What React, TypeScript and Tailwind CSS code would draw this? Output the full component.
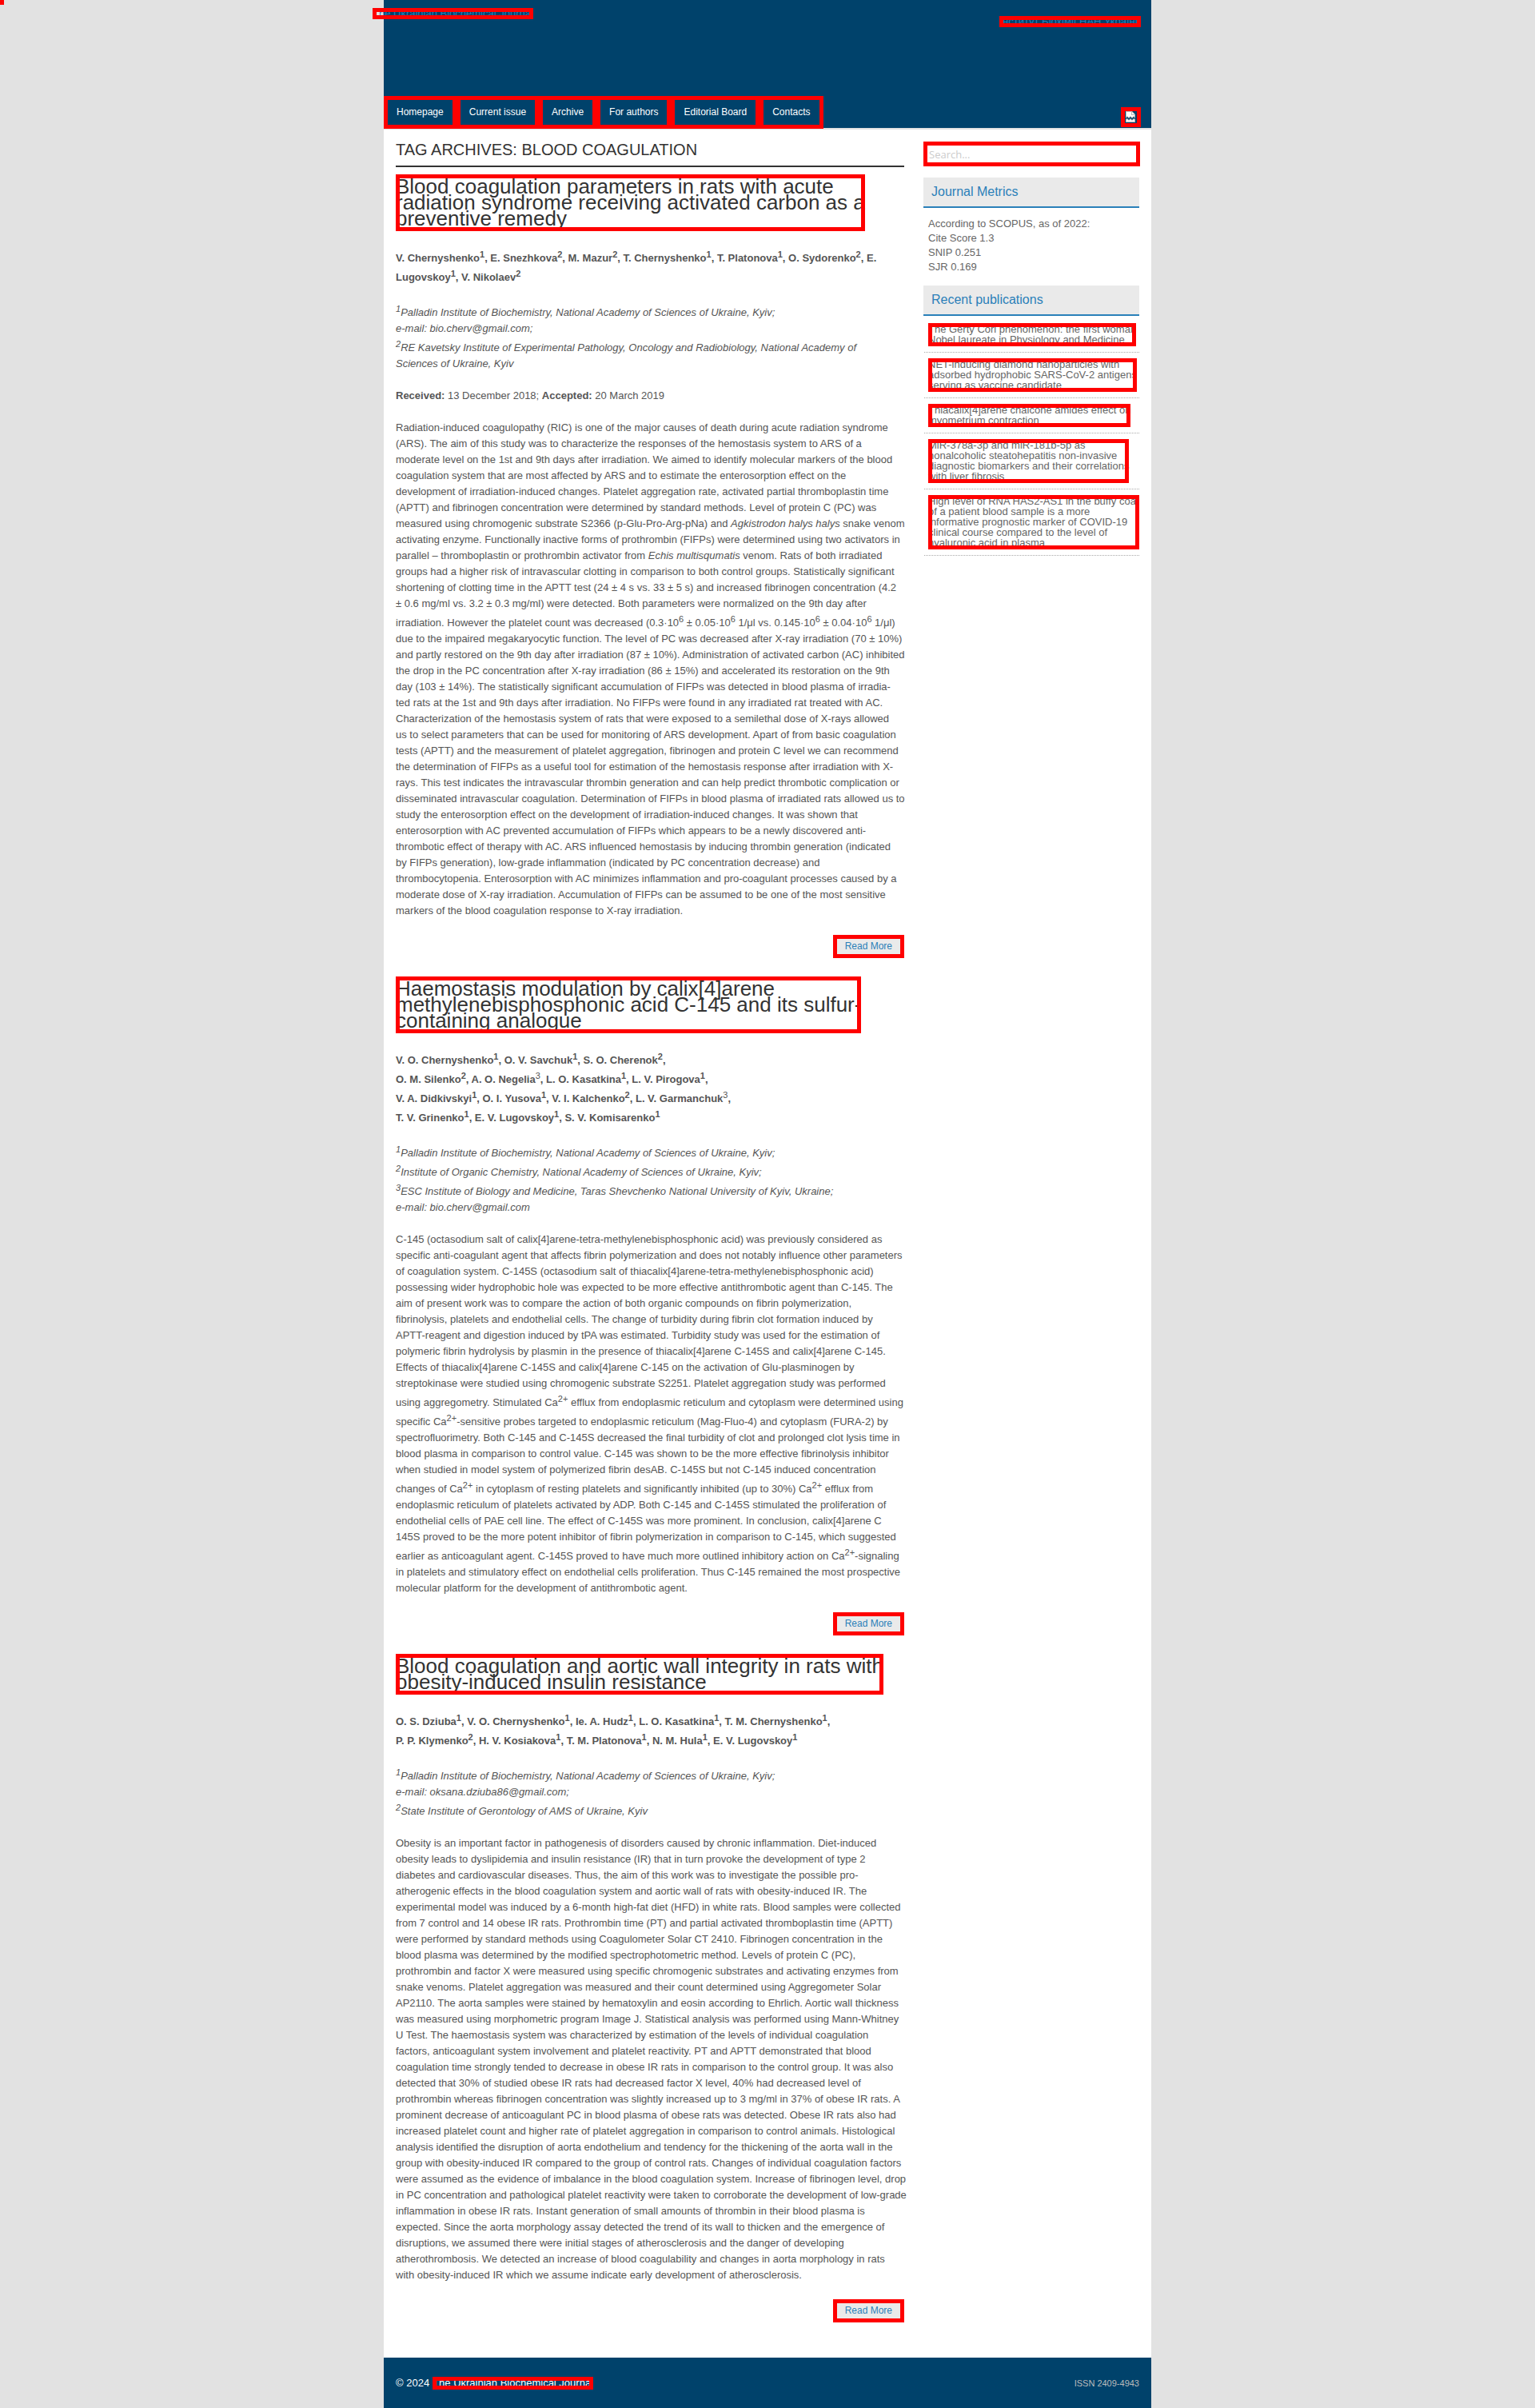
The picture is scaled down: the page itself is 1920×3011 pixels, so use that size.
import React from "react";

const NAV = ["Homepage", "Current issue", "Archive", "For authors", "Editorial Board", "Contacts"];

const RECENT: string[][] = [
  ["The Gerty Cori phenomenon: the first woman", "Nobel laureate in Physiology and Medicine"],
  ["NET-inducing diamond nanoparticles with", "adsorbed hydrophobic SARS-CoV-2 antigens", "serving as vaccine candidate"],
  ["Thiacalix[4]arene chalcone amides effect on", "myometrium contraction"],
  ["MiR-378a-3p and miR-181b-5p as", "nonalcoholic steatohepatitis non-invasive", "diagnostic biomarkers and their correlations", "with liver fibrosis"],
  ["High level of RNA HAS2-AS1 in the buffy coat", "of a patient blood sample is a more", "informative prognostic marker of COVID-19", "clinical course compared to the level of", "hyaluronic acid in plasma"],
];

const MARK = "outline-[5px] -outline-offset-[5px] outline-[#ff0000]";

function Lines({ lines }: { lines: string[] }) {
  return (
    <>
      {lines.map((line) => (
        <span key={line} className="block whitespace-nowrap">
          {line}
        </span>
      ))}
    </>
  );
}

function Article({ title, children }: { title: string[]; children: React.ReactNode }) {
  return (
    <article className="mb-[23px]">
      <h2 className="mb-5 flex text-[26px] leading-[20px] text-[#333333]">
        <a href="#" className={`block pt-[5px] pb-[6px] ${MARK}`}>
          <Lines lines={title} />
        </a>
      </h2>
      <div className="flex flex-col gap-5 [&_sup]:static [&_sup]:align-[5px] [&_sup]:text-[11px] [&_sup]:leading-[18px]">{children}</div>
      <div className="mt-5 flex justify-end">
        <a href="#" className={`block bg-[#eaeaea] px-[15px] py-1 text-[12px] leading-[21px] text-[#2a80b9] ${MARK}`}>
          Read More
        </a>
      </div>
    </article>
  );
}

function WidgetTitle({ children }: { children: React.ReactNode }) {
  return (
    <h3 className="border-b-2 border-[#2a80b9] bg-[#eaeaea] px-[10px] text-[16px] leading-[36px] text-[#2a80b9]">{children}</h3>
  );
}

function BrokenImage() {
  return (
    <svg width="15" height="15" viewBox="0 0 15 15" role="img" aria-label="Language" className="block">
      <path d="M1 0h8l4 4v5l-2-2-2 2-2-2-2 2-2-2-2 2z" fill="#b8b8b8" />
      <path d="M2 1h6v4h4v2l-1-1-2 2-2-2-2 2-2-2-1 1z" fill="#ffffff" />
      <path d="M9 1l3 3H9z" fill="#ffffff" />
      <path d="M1 10l2-1 2 2 2-2 2 2 2-2 2 1v4H1z" fill="#b8b8b8" />
      <path d="M2 11l1-1 2 2 2-2 2 2 2-2 1 1v2H2z" fill="#ffffff" />
    </svg>
  );
}

const S = ({ n }: { n: string }) => <sup>{n}</sup>;

export default function App() {
  return (
    <div className="min-h-screen bg-[#e2e2e2] font-['Liberation_Sans',Arial,sans-serif] text-[13px] leading-[20px] text-[#555555]">
      <div className="absolute top-0 left-0 h-[6px] w-[5px] bg-[#ff0000]" />
      <div className="mx-auto max-w-[960px] bg-white">
        <header className="flex h-[162px] flex-col justify-between border-b-2 border-[#e2e2e2] bg-[#00426b]">
          <div className="flex items-start justify-between pr-[13px] leading-[14px] text-[#2a80b9]">
            <a href="#" className={`mt-[10px] -ml-[14px] block h-[14px] ${MARK}`}>
              The Ukrainian Biochemical Journal
            </a>
            <a href="#" className={`mt-5 block h-[14px] ${MARK}`}>
              Інститут Біохімії НАН України
            </a>
          </div>
          <div className="flex items-end justify-between pr-[13px]">
            <nav className="-mb-px flex text-[12px] text-white">
              {NAV.map((item) => (
                <a key={item} href="#" className={`block px-4 leading-[41px] ${MARK}`}>
                  {item}
                </a>
              ))}
            </nav>
            <a href="#" className={`mb-px block p-[5px] ${MARK}`}>
              <BrokenImage />
            </a>
          </div>
        </header>

        <div className="flex gap-6 px-[15px] pt-[15px] pb-[21px]">
          <main className="min-w-0 flex-1">
            <h1 className="mb-[9px] border-b-2 border-[#333333] pb-[10px] text-[20px] leading-[20px] text-[#333333] uppercase">
              Tag Archives: blood coagulation
            </h1>

            <Article
              title={["Blood coagulation parameters in rats with acute", "radiation syndrome receiving activated carbon as a", "preventive remedy"]}
            >
              <p className="font-bold">
                V. Chernyshenko<S n="1" />, E. Snezhkova<S n="2" />, M. Mazur<S n="2" />, T. Chernyshenko<S n="1" />, T. Platonova<S n="1" />, O. Sydorenko<S n="2" />, E.<br />
                Lugovskoy<S n="1" />, V. Nikolaev<S n="2" />
              </p>
              <p className="italic">
                <S n="1" />Palladin Institute of Biochemistry, National Academy of Sciences of Ukraine, Kyiv;<br />
                e-mail: bio.cherv@gmail.com;<br />
                <S n="2" />RE Kavetsky Institute of Experimental Pathology, Oncology and Radiobiology, National Academy of<br />
                Sciences of Ukraine, Kyiv
              </p>
              <p>
                <b>Received:</b> 13 December 2018; <b>Accepted:</b> 20 March 2019
              </p>
              <p className="-mr-4">
                Radiation-induced coagulopathy (RIC) is one of the major causes of death during acute radiation syndrome<br />
                (ARS). The aim of this study was to characterize the responses of the hemostasis system to ARS of a<br />
                moderate level on the 1st and 9th days after irradiation. We aimed to identify molecular markers of the blood<br />
                coagulation system that are most affected by ARS and to estimate the enterosorption effect on the<br />
                development of irradiation-induced changes. Platelet aggregation rate, activated partial thromboplastin time<br />
                (APTT) and fibrinogen concentration were determined by standard methods. Level of protein C (PC) was<br />
                measured using chromogenic substrate S2366 (p-Glu-Pro-Arg-pNa) and <i>Agkistrodon halys halys</i> snake venom<br />
                activating enzyme. Functionally inactive forms of prothrombin (FIFPs) were determined using two activators in<br />
                parallel – thromboplastin or prothrombin activator from <i>Echis multisqumatis</i> venom. Rats of both irradiated<br />
                groups had a higher risk of intravascular clotting in comparison to both control groups. Statistically significant<br />
                shortening of clotting time in the APTT test (24 ± 4 s vs. 33 ± 5 s) and increased fibrinogen concentration (4.2<br />
                ± 0.6 mg/ml vs. 3.2 ± 0.3 mg/ml) were detected. Both parameters were normalized on the 9th day after<br />
                irradiation. However the platelet count was decreased (0.3·10<S n="6" /> ± 0.05·10<S n="6" /> 1/μl vs. 0.145·10<S n="6" /> ± 0.04·10<S n="6" /> 1/μl)<br />
                due to the impaired megakaryocytic function. The level of PC was decreased after X-ray irradiation (70 ± 10%)<br />
                and partly restored on the 9th day after irradiation (87 ± 10%). Administration of activated carbon (AC) inhibited<br />
                the drop in the PC concentration after X-ray irradiation (86 ± 15%) and accelerated its restoration on the 9th<br />
                day (103 ± 14%). The statistically significant accumulation of FIFPs was detected in blood plasma of irradia-<br />
                ted rats at the 1st and 9th days after irradiation. No FIFPs were found in any irradiated rat treated with AC.<br />
                Characterization of the hemostasis system of rats that were exposed to a semilethal dose of X-rays allowed<br />
                us to select parameters that can be used for monitoring of ARS development. Apart of from basic coagulation<br />
                tests (APTT) and the measurement of platelet aggregation, fibrinogen and protein C level we can recommend<br />
                the determination of FIFPs as a useful tool for estimation of the hemostasis response after irradiation with X-<br />
                rays. This test indicates the intravascular thrombin generation and can help predict thrombotic complication or<br />
                disseminated intravascular coagulation. Determination of FIFPs in blood plasma of irradiated rats allowed us to<br />
                study the enterosorption effect on the development of irradiation-induced changes. It was shown that<br />
                enterosorption with AC prevented accumulation of FIFPs which appears to be a newly discovered anti-<br />
                thrombotic effect of therapy with AC. ARS influenced hemostasis by inducing thrombin generation (indicated<br />
                by FIFPs generation), low-grade inflammation (indicated by PC concentration decrease) and<br />
                thrombocytopenia. Enterosorption with AC minimizes inflammation and pro-coagulant processes caused by a<br />
                moderate dose of X-ray irradiation. Accumulation of FIFPs can be assumed to be one of the most sensitive<br />
                markers of the blood coagulation response to X-ray irradiation.
              </p>
            </Article>

            <Article
              title={["Haemostasis modulation by calix[4]arene", "methylenebisphosphonic acid C-145 and its sulfur-", "containing analogue"]}
            >
              <p className="font-bold">
                V. O. Chernyshenko<S n="1" />, O. V. Savchuk<S n="1" />, S. O. Cherenok<S n="2" />,<br />
                O. M. Silenko<S n="2" />, A. O. Negelia<sup className="font-normal">3</sup>, L. O. Kasatkina<S n="1" />, L. V. Pirogova<S n="1" />,<br />
                V. A. Didkivskyi<S n="1" />, O. I. Yusova<S n="1" />, V. I. Kalchenko<S n="2" />, L. V. Garmanchuk<sup className="font-normal">3</sup>,<br />
                T. V. Grinenko<S n="1" />, E. V. Lugovskoy<S n="1" />, S. V. Komisarenko<S n="1" />
              </p>
              <p className="italic">
                <S n="1" />Palladin Institute of Biochemistry, National Academy of Sciences of Ukraine, Kyiv;<br />
                <S n="2" />Institute of Organic Chemistry, National Academy of Sciences of Ukraine, Kyiv;<br />
                <S n="3" />ESC Institute of Biology and Medicine, Taras Shevchenko National University of Kyiv, Ukraine;<br />
                e-mail: bio.cherv@gmail.com
              </p>
              <p>
                C-145 (octasodium salt of calix[4]arene-tetra-methylenebisphosphonic acid) was previously considered as specific anti-coagulant agent that affects fibrin polymerization and does not notably influence other parameters of coagulation system. C-145S (octasodium salt of thiacalix[4]arene-tetra-methylenebisphosphonic acid) possessing wider hydrophobic hole was expected to be more effective antithrombotic agent than C-145. The aim of present work was to compare the action of both organic compounds on fibrin polymerization, fibrinolysis, platelets and endothelial cells. The change of turbidity during fibrin clot formation induced by APTT-reagent and digestion induced by tPA was estimated. Turbidity study was used for the estimation of polymeric fibrin hydrolysis by plasmin in the presence of thiacalix[4]arene C-145S and calix[4]arene C-145. Effects of thiacalix[4]arene C-145S and calix[4]arene C-145 on the activation of Glu-plasminogen by streptokinase were studied using chromogenic substrate S2251. Platelet aggregation study was performed using aggregometry. Stimulated Ca<S n="2+" /> efflux from endoplasmic reticulum and cytoplasm were determined using specific Ca<S n="2+" />-sensitive probes targeted to endoplasmic reticulum (Mag-Fluo-4) and cytoplasm (FURA-2) by spectrofluorimetry. Both C-145 and C-145S decreased the final turbidity of clot and prolonged clot lysis time in blood plasma in comparison to control value. C-145 was shown to be the more effective fibrinolysis inhibitor when studied in model system of polymerized fibrin desAB. C-145S but not C-145 induced concentration changes of Ca<S n="2+" /> in cytoplasm of resting platelets and significantly inhibited (up to 30%) Ca<S n="2+" /> efflux from endoplasmic reticulum of platelets activated by ADP. Both C-145 and C-145S stimulated the proliferation of endothelial cells of PAE cell line. The effect of C-145S was more prominent. In conclusion, calix[4]arene C 145S proved to be the more potent inhibitor of fibrin polymerization in comparison to C-145, which suggested earlier as anticoagulant agent. C-145S proved to have much more outlined inhibitory action on Ca<S n="2+" />-signaling in platelets and stimulatory effect on endothelial cells proliferation. Thus C-145 remained the most prospective molecular platform for the development of antithrombotic agent.
              </p>
            </Article>

            <Article title={["Blood coagulation and aortic wall integrity in rats with", "obesity-induced insulin resistance"]}>
              <p className="font-bold">
                O. S. Dziuba<S n="1" />, V. O. Chernyshenko<S n="1" />, Ie. A. Hudz<S n="1" />, L. O. Kasatkina<S n="1" />, T. M. Chernyshenko<S n="1" />,<br />
                P. P. Klymenko<S n="2" />, H. V. Kosiakova<S n="1" />, T. M. Platonova<S n="1" />, N. M. Hula<S n="1" />, E. V. Lugovskoy<S n="1" />
              </p>
              <p className="italic">
                <S n="1" />Palladin Institute of Biochemistry, National Academy of Sciences of Ukraine, Kyiv;<br />
                e-mail: oksana.dziuba86@gmail.com;<br />
                <S n="2" />State Institute of Gerontology of AMS of Ukraine, Kyiv
              </p>
              <p className="-mr-4">
                Obesity is an important factor in pathogenesis of disorders caused by chronic inflammation. Diet-induced<br />
                obesity leads to dyslipidemia and insulin resistance (IR) that in turn provoke the development of type 2<br />
                diabetes and cardiovascular diseases. Thus, the aim of this work was to investigate the possible pro-<br />
                atherogenic effects in the blood coagulation system and aortic wall of rats with obesity-induced IR. The<br />
                experimental model was induced by a 6-month high-fat diet (HFD) in white rats. Blood samples were collected<br />
                from 7 control and 14 obese IR rats. Prothrombin time (PT) and partial activated thromboplastin time (APTT)<br />
                were performed by standard methods using Coagulometer Solar CT 2410. Fibrinogen concentration in the<br />
                blood plasma was determined by the modified spectrophotometric method. Levels of protein C (PC),<br />
                prothrombin and factor X were measured using specific chromogenic substrates and activating enzymes from<br />
                snake venoms. Platelet aggregation was measured and their count determined using Aggregometer Solar<br />
                AP2110. The aorta samples were stained by hematoxylin and eosin according to Ehrlich. Aortic wall thickness<br />
                was measured using morphometric program Image J. Statistical analysis was performed using Mann-Whitney<br />
                U Test. The haemostasis system was characterized by estimation of the levels of individual coagulation<br />
                factors, anticoagulant system involvement and platelet reactivity. PT and APTT demonstrated that blood<br />
                coagulation time strongly tended to decrease in obese IR rats in comparison to the control group. It was also<br />
                detected that 30% of studied obese IR rats had decreased factor X level, 40% had decreased level of<br />
                prothrombin whereas fibrinogen concentration was slightly increased up to 3 mg/ml in 37% of obese IR rats. A<br />
                prominent decrease of anticoagulant PC in blood plasma of obese rats was detected. Obese IR rats also had<br />
                increased platelet count and higher rate of platelet aggregation in comparison to control animals. Histological<br />
                analysis identified the disruption of aorta endothelium and tendency for the thickening of the aorta wall in the<br />
                group with obesity-induced IR compared to the group of control rats. Changes of individual coagulation factors<br />
                were assumed as the evidence of imbalance in the blood coagulation system. Increase of fibrinogen level, drop<br />
                in PC concentration and pathological platelet reactivity were taken to corroborate the development of low-grade<br />
                inflammation in obese IR rats. Instant generation of small amounts of thrombin in their blood plasma is<br />
                expected. Since the aorta morphology assay detected the trend of its wall to thicken and the emergence of<br />
                disruptions, we assumed there were initial stages of atherosclerosis and the danger of developing<br />
                atherothrombosis. We detected an increase of blood coagulability and changes in aorta morphology in rats<br />
                with obesity-induced IR which we assume indicate early development of atherosclerosis.
              </p>
            </Article>
          </main>

          <aside className="w-[270px] shrink-0 text-[#666666]">
            <input
              type="search"
              aria-label="Search"
              placeholder="Search..."
              className={`mb-[14px] block h-[31px] w-[271px] bg-white px-[7px] font-['Open_Sans',sans-serif] text-[13px] placeholder:text-[#cccccc] ${MARK}`}
            />
            <section>
              <WidgetTitle>Journal Metrics</WidgetTitle>
              <p className="px-[6px] pt-[11px] pb-[14px] leading-[18px]">
                According to SCOPUS, as of 2022:<br />
                Cite Score 1.3<br />
                SNIP 0.251<br />
                SJR 0.169
              </p>
            </section>
            <section>
              <WidgetTitle>Recent publications</WidgetTitle>
              <ul className="ml-px pt-[2px]">
                {RECENT.map((lines) => (
                  <li key={lines[0]} className="flex border-b border-dotted border-[#aaaaaa] py-[7px] pl-[5px] leading-[13px]">
                    <a href="#" className={`block pt-px pb-[2px] ${MARK}`}>
                      <Lines lines={lines} />
                    </a>
                  </li>
                ))}
              </ul>
            </section>
          </aside>
        </div>

        <footer className="flex h-[63px] items-center justify-between bg-[#00426b] px-[15px] text-white">
          <p className="flex items-center gap-1">
            © 2024
            <a href="#" className={`block leading-[16px] ${MARK}`}>
              The Ukrainian Biochemical Journal
            </a>
          </p>
          <p className="text-[11px] text-[#bbbbbb]">ISSN 2409-4943</p>
        </footer>
      </div>
    </div>
  );
}
